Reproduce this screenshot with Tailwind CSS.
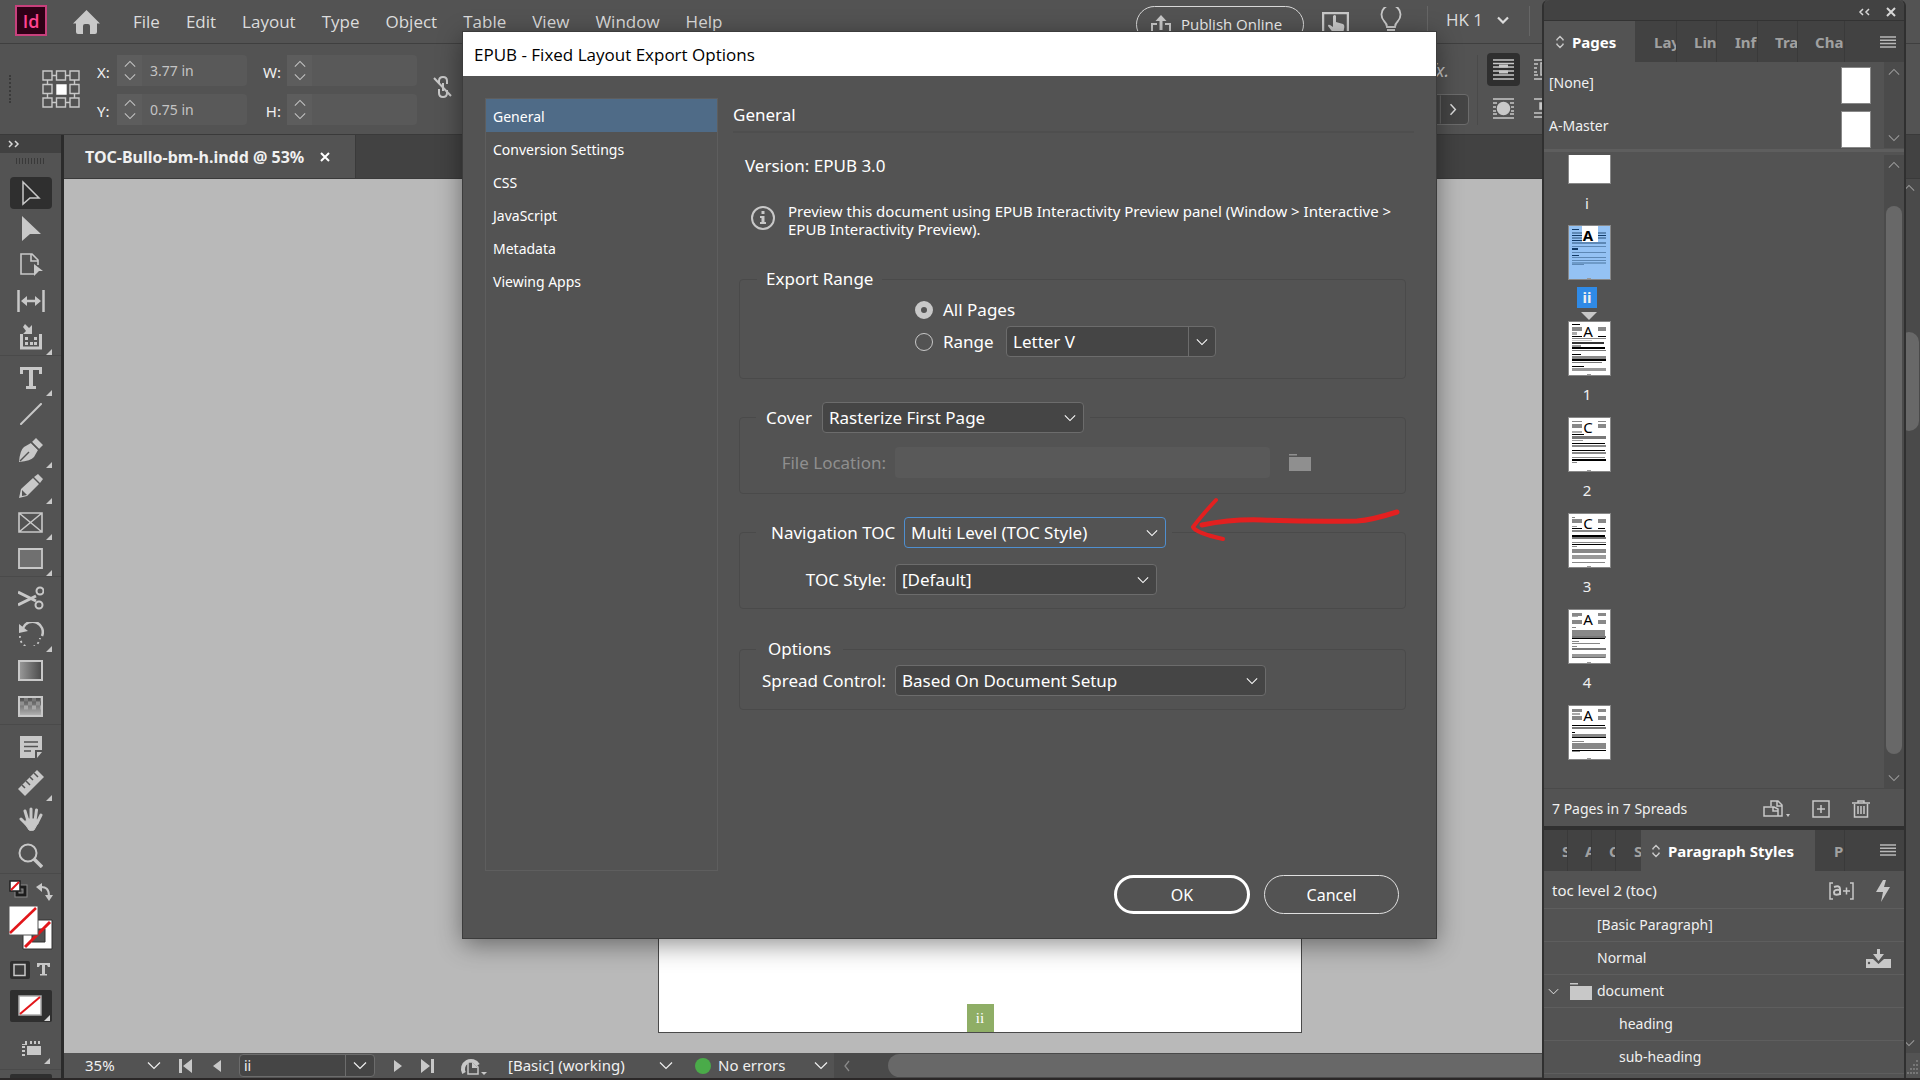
<!DOCTYPE html>
<html lang="en">
  <head>
    <meta charset="UTF-8" />
    <meta name="viewport" content="width=device-width, initial-scale=1" />
    <title>TOC-Bullo-bm-h.indd @ 53%</title>
    <script src="https://cdn.jsdelivr.net/npm/@tailwindcss/browser@4"></script>
  </head>
  <body
    class="relative flex flex-col h-screen overflow-hidden bg-[#535353] text-[#f0f0f0] text-[15px] font-['Noto_Sans',sans-serif]"
  >
    <!-- shared shapes -->
    <svg class="hidden">
      <symbol id="down" viewBox="0 0 14 9">
        <path d="M1 1.5l6 6 6-6" fill="none" stroke="currentColor" stroke-width="1.2" />
      </symbol>
      <symbol id="up" viewBox="0 0 14 9">
        <path d="M1 7.5l6-6 6 6" fill="none" stroke="currentColor" stroke-width="1.2" />
      </symbol>
      <symbol id="updown" viewBox="0 0 8 14">
        <path d="M1 5.500V4.500l3-3 3 3v1M1 8.500v1l3 3 3-3v-1" fill="none" stroke="currentColor" stroke-width="1.500" />
      </symbol>
      <symbol id="lines" viewBox="0 0 16 12">
        <path d="M0 1h16M0 4.300h16M0 7.600h16M0 11h16" stroke="currentColor" stroke-width="1.500" />
      </symbol>
      <symbol id="folder" viewBox="0 0 22 17">
        <path d="M0 0h8v1.500H0zM0 3h22v14H0z" fill="currentColor" />
      </symbol>
      <symbol id="corner" viewBox="0 0 6 6">
        <path d="M6 0v6H0z" fill="currentColor" />
      </symbol>
    </svg>

    <!-- menu bar -->
    <header class="flex items-start h-11 shrink-0 border-b border-[#3f3f3f] pl-[15px] font-['Open_Sans',sans-serif] text-[#dcdcdc]">
      <div class="mt-[5px] grid place-items-center w-8 h-[31px] bg-[#2e0016] border-2 border-[#c8407c] text-[#ff4490] text-lg leading-none font-semibold">Id</div>
      <button class="ml-[26px] mt-[10px] w-[27px] h-6" aria-label="Home">
        <svg viewBox="0 0 27 24" class="w-full h-full"><path d="M13.500 0L27 13.500H24V22q0 2-2 2H17v-8q0-2-2-2h-3q-2 0-2 2v8H5q-2 0-2-2V13.500H0z" fill="#c8c8c8" /></svg>
      </button>
      <nav class="ml-[33px] flex gap-[26px] leading-[43px] text-[17px]">
        <a href="#">File</a><a href="#">Edit</a><a href="#">Layout</a><a href="#">Type</a><a href="#">Object</a><a href="#">Table</a><a href="#">View</a><a href="#">Window</a><a href="#">Help</a>
      </nav>
      <div class="ml-auto flex items-start pr-[390px]">
        <button class="mt-[6px] flex items-center gap-[10px] h-[37px] w-[168px] pl-[14px] border border-[#d8d8d8] rounded-full text-[15px] text-[#f0f0f0]">
          <svg viewBox="0 0 20 20" class="w-5 h-5 text-[#c8c8c8]" fill="none" stroke="currentColor" stroke-width="2"><path d="M6 9H1v10h18V9h-5" /><path d="M10 15V4" stroke-width="3" /><path d="M10 0l5.500 6h-11z" fill="currentColor" stroke="none" /></svg>
          Publish Online
        </button>
        <svg viewBox="0 0 27 26" class="ml-[18px] mt-3 w-[27px] h-[26px] text-[#c8c8c8]"><path d="M1 1h25v24H1z" fill="none" stroke="currentColor" stroke-width="2.500" /><path d="M11 4q2-2 3 0v6l7 2q2 1 1 5l-1 5H12l-6-8q0-2 2-1l3 2z" fill="currentColor" /></svg>
        <svg viewBox="0 0 22 28" class="ml-[31px] mt-[7px] w-[22px] h-7 text-[#c8c8c8]"><path d="M7 20q0-3-3-6a9.500 9.500 0 1 1 14 0q-3 3-3 6z" fill="none" stroke="currentColor" stroke-width="1.800" /><path d="M7 22h8v4H7z" fill="currentColor" /></svg>
        <div class="ml-[25px] mt-[6px] w-px h-[30px] bg-[#666]"></div>
        <button class="ml-[18px] flex items-center gap-[14px] h-10 text-[17px]">HK 1
          <svg class="w-[12px] h-2" viewBox="0 0 12 8"><path d="M1 1.500l5 5 5-5" fill="none" stroke="#dcdcdc" stroke-width="2.200" /></svg>
        </button>
        <div class="ml-5 mt-[6px] w-px h-[30px] bg-[#666]"></div>
      </div>
    </header>

    <!-- control strip -->
    <div class="flex h-[91px] shrink-0 border-b border-[#3a3a3a] pl-2 pt-[11px] text-[#c4c4c4]">
      <div class="mt-5 w-[3px] h-7 border-r-2 border-dotted border-[#3a3a3a]"></div>
      <svg viewBox="0 0 38 38" class="ml-[31px] mt-[15px] w-[38px] h-[38px]" fill="none" stroke="#c8c8c8" stroke-width="1.400">
        <path d="M1 1h9v9H1zM14.500 1h9v9h-9zM28 1h9v9h-9zM1 14.500h9v9H1zM28 14.500h9v9h-9zM1 28h9v9H1zM14.500 28h9v9h-9zM28 28h9v9h-9zM10 5.500h4.500M23.500 5.500H28M10 32.500h4.500M23.500 32.500H28M5.500 10v4.500M5.500 23.500V28M32.500 10v4.500M32.500 23.500V28" />
        <path d="M15 15h9v9h-9z" fill="#fff" stroke="#fff" />
      </svg>
      <div class="ml-[17px] grid grid-cols-[20px_130px_40px_130px] auto-rows-[31px] gap-y-2 items-center h-[70px]">
        <label for="x" class="pt-1 text-[#f0f0f0]">X:</label>
        <div class="flex h-full bg-[#595959] rounded-sm"><span class="w-[25px] flex flex-col items-center justify-between py-[5px] bg-[#5d5d5d]"><svg class="w-3 h-2"><use href="#up" /></svg><svg class="w-3 h-2"><use href="#down" /></svg></span><input id="x" value="3.77 in" class="w-[100px] pl-2 bg-transparent text-sm" /></div>
        <label for="w" class="pt-1 text-[#f0f0f0] text-right pr-[6px]">W:</label>
        <div class="flex h-full bg-[#595959] rounded-sm"><span class="w-[25px] flex flex-col items-center justify-between py-[5px] bg-[#5d5d5d]"><svg class="w-3 h-2"><use href="#up" /></svg><svg class="w-3 h-2"><use href="#down" /></svg></span><input id="w" class="w-[100px] pl-2 bg-transparent" /></div>
        <label for="y" class="pt-1 text-[#f0f0f0]">Y:</label>
        <div class="flex h-full bg-[#595959] rounded-sm"><span class="w-[25px] flex flex-col items-center justify-between py-[5px] bg-[#5d5d5d]"><svg class="w-3 h-2"><use href="#up" /></svg><svg class="w-3 h-2"><use href="#down" /></svg></span><input id="y" value="0.75 in" class="w-[100px] pl-2 bg-transparent text-sm" /></div>
        <label for="h" class="pt-1 text-[#f0f0f0] text-right pr-[6px]">H:</label>
        <div class="flex h-full bg-[#595959] rounded-sm"><span class="w-[25px] flex flex-col items-center justify-between py-[5px] bg-[#5d5d5d]"><svg class="w-3 h-2"><use href="#up" /></svg><svg class="w-3 h-2"><use href="#down" /></svg></span><input id="h" class="w-[100px] pl-2 bg-transparent" /></div>
      </div>
      <svg viewBox="0 0 20 22" class="ml-4 mt-[21px] w-5 h-[22px]" fill="none" stroke="#c8c8c8" stroke-width="2"><path d="M6 8V5q0-4 4-4t4 4v3M6 13v4q0 4 4 4t4-4v-3M10 7v8M1 2l17 18" /></svg>
      <div class="ml-auto mr-[365px] flex items-start">
        <div class="w-[70px]">
          <div class="h-[31px] pl-[31px] text-lg italic leading-[31px]">fx.</div>
          <button class="mt-2 flex w-[70px] h-[31px] border border-[#6c6c6c] rounded bg-[#454545]" aria-label="More">
            <svg viewBox="0 0 70 29" class="w-full h-full"><path d="M41.500 0v29" stroke="#6c6c6c" /><path d="M52 9l5 5.500-5 5.500" fill="none" stroke="#dcdcdc" stroke-width="1.500" /></svg>
          </button>
        </div>
        <div class="ml-2 mr-[9px] w-px h-[70px] bg-[#4a4a4a]"></div>
        <div class="w-[33px] flex flex-col items-center">
          <div class="-mt-[2px] grid place-items-center w-[33px] h-[33px] rounded bg-[#2f2f2f]"><svg viewBox="0 0 21 21" class="w-[21px] h-[21px]" stroke="#c8c8c8" stroke-width="1.500"><path d="M0 1h21M0 4.500h21M0 8h21M0 12h21M0 16h21M0 20h21" /><path d="M6 7h9M6 13h9" stroke-width="3" /></svg></div>
          <svg viewBox="0 0 21 21" class="mt-3 w-[21px] h-[21px]" stroke="#c8c8c8" stroke-width="1.500"><path d="M0 1h21M0 5h4M17 5h4M0 9h3M18 9h3M0 13h3M18 13h3M0 16h4M17 16h4M0 20h21" /><circle cx="10.500" cy="10.500" r="6" fill="#c8c8c8" /></svg>
        </div>
        <svg viewBox="0 0 21 66" class="ml-[14px] mt-1 w-[21px] h-[66px]" stroke="#c8c8c8" stroke-width="1.500" fill="none"><path d="M0 1h21M0 5h4M0 9h3M0 13h3M0 16h4M0 20h21M7 4h8v12H7zM0 40h21M0 54h21M0 58h21" /><path d="M6 44h9v6H6z" fill="#c8c8c8" /></svg>
      </div>
    </div>

    <div class="flex flex-1 min-h-0">
      <!-- toolbox -->
      <aside class="w-16 shrink-0 overflow-hidden border-r-[3px] border-[#2b2b2b] text-[#c8c8c8]">
        <div class="h-[18px] pl-2 flex items-center bg-[#414141]"><svg viewBox="0 0 12 8" class="w-3 h-2" fill="none" stroke="#d8d8d8" stroke-width="1.500"><path d="M1 1l3 3-3 3M7 1l3 3-3 3" /></svg></div>
        <svg viewBox="0 0 30 6" class="ml-[15px] my-[5px] w-[30px] h-[6px]"><path d="M1 3h29" stroke="#393939" stroke-width="6" stroke-dasharray="1 2" /></svg>
        <div class="flex flex-col items-center">
          <button class="relative h-[36px] w-[43px] mt-[6px] grid place-items-center" aria-label="Selection"><span class="grid place-items-center w-[42px] h-8 rounded bg-[#2f2f2f]"><svg viewBox="0 0 20 26" class="w-5 h-[26px]" fill="none" stroke="#c8c8c8" stroke-width="1.500"><path d="M2 2l16 16H9l-7 6z" /></svg></span></button>
          <button class="h-9 w-[43px] grid place-items-center" aria-label="Direct Selection"><svg viewBox="0 0 20 26" class="w-5 h-[26px]"><path d="M1 0l19 18H9l-8 7z" fill="currentColor" /></svg></button>
          <button class="h-9 w-[43px] grid place-items-center" aria-label="Page"><svg viewBox="0 0 24 24" class="w-6 h-6"><path d="M15 21H2V1h11l6 6v5M12 1v7h7" fill="none" stroke="currentColor" stroke-width="1.600" /><path d="M15 11l9 7h-4l-5 5z" fill="currentColor" /></svg></button>
          <button class="h-9 w-[43px] grid place-items-center" aria-label="Gap"><svg viewBox="0 0 28 22" class="w-7 h-[22px]"><path d="M1.500 0v22M26.500 0v22M6 11h16" stroke="currentColor" stroke-width="2.500" /><path d="M4 11l6-5v10zM24 11l-6-5v10z" fill="currentColor" /></svg></button>
          <button class="relative h-9 w-[43px] grid place-items-center" aria-label="Content Collector"><svg viewBox="0 0 22 26" class="w-[22px] h-[26px]"><path d="M1.500 10v14h19V10" fill="none" stroke="currentColor" stroke-width="3" /><path d="M5 13h3v3H5zM14 13h3v3h-3zM5 18h3v3H5zM10 18h3v3h-3zM14 18h3v3h-3zM12 1v9H3l3-3-3-4 2-3 4 4z" fill="currentColor" /></svg><svg class="absolute right-0 bottom-0 w-[6px] h-[6px]"><use href="#corner" /></svg></button>
          <hr class="w-full h-[5px] border-0 border-t border-[#4a4a4a]" />
          <button class="relative h-9 w-[43px] grid place-items-center" aria-label="Type"><svg viewBox="0 0 22 22" class="w-[22px] h-[22px]"><path d="M0 0h22v7h-3V3h-6v16h3v3H6v-3h3V3H3v4H0z" fill="currentColor" /></svg><svg class="absolute right-0 bottom-0 w-[6px] h-[6px]"><use href="#corner" /></svg></button>
          <button class="h-9 w-[43px] grid place-items-center" aria-label="Line"><svg viewBox="0 0 22 22" class="w-[22px] h-[22px]"><path d="M1 21L21 1" stroke="currentColor" stroke-width="2" stroke-linecap="round" /></svg></button>
          <button class="relative h-9 w-[43px] grid place-items-center" aria-label="Pen"><svg viewBox="0 0 24 24" class="w-6 h-6"><path d="M0 24q1-12 5-15l7-4 7 7-4 7q-3 4-15 5zM17 0l7 7-4 4-7-7z" fill="currentColor" /><path d="M1 23l9-9" stroke="#535353" stroke-width="1.500" /><path d="M12 4l8 8" stroke="#535353" stroke-width="1.500" /></svg><svg class="absolute right-0 bottom-0 w-[6px] h-[6px]"><use href="#corner" /></svg></button>
          <button class="relative h-9 w-[43px] grid place-items-center" aria-label="Pencil"><svg viewBox="0 0 24 24" class="w-6 h-6"><path d="M0 24l2-9L14 4l6 6L8 22zM19 0l5 5-3 4-6-6z" fill="currentColor" /><path d="M3 16l5 5-5 1z" fill="#535353" /></svg><svg class="absolute right-0 bottom-0 w-[6px] h-[6px]"><use href="#corner" /></svg></button>
          <button class="relative h-9 w-[43px] grid place-items-center" aria-label="Frame"><svg viewBox="0 0 25 21" class="w-[25px] h-[21px]"><path d="M1 1h23v19H1zL24 20M24 1L1 20" fill="none" stroke="currentColor" stroke-width="1.600" /></svg><svg class="absolute right-0 bottom-0 w-[6px] h-[6px]"><use href="#corner" /></svg></button>
          <button class="relative h-9 w-[43px] grid place-items-center" aria-label="Rectangle"><svg viewBox="0 0 25 21" class="w-[25px] h-[21px]"><path d="M1 1h23v19H1z" fill="#707070" stroke="currentColor" stroke-width="1.800" /></svg><svg class="absolute right-0 bottom-0 w-[6px] h-[6px]"><use href="#corner" /></svg></button>
          <hr class="w-full h-1 border-0 border-t border-[#4a4a4a]" />
          <button class="h-9 w-[43px] grid place-items-center" aria-label="Scissors"><svg viewBox="0 0 26 24" class="w-[26px] h-6" fill="none" stroke="currentColor" stroke-width="2"><path d="M0 6l18 9M0 19l18-9" stroke-width="3" /><circle cx="22" cy="5" r="3.500" /><circle cx="21" cy="19" r="3.500" /></svg></button>
          <button class="relative h-9 w-[43px] grid place-items-center" aria-label="Rotate"><svg viewBox="0 0 26 24" class="w-[26px] h-6" fill="none" stroke="currentColor" stroke-width="2.500"><path d="M5 6a10 10 0 0 1 19 8" /><path d="M2 14a10 10 0 0 0 20 2" stroke-width="1.800" stroke-dasharray="2 3" /><path d="M1 2v9l9-2z" fill="currentColor" stroke="none" /></svg><svg class="absolute right-0 bottom-0 w-[6px] h-[6px]"><use href="#corner" /></svg></button>
          <button class="h-9 w-[43px] grid place-items-center" aria-label="Gradient Swatch"><span class="w-[25px] h-[21px] border-2 border-[#c8c8c8] bg-linear-to-r from-[#979797] to-[#4d4d4d]"></span></button>
          <button class="h-9 w-[43px] grid place-items-center" aria-label="Gradient Feather"><span class="w-[25px] h-[21px] border-2 border-[#c8c8c8] bg-linear-to-b from-[#505050] to-[#b0b0b0]"><svg viewBox="0 0 21 17" class="w-full h-full"><path d="M0 5.500h21" stroke="#909090" stroke-width="4" stroke-dasharray="4 4" /><path d="M4 9.500h17" stroke="#a8a8a8" stroke-width="4" stroke-dasharray="4 4" /><path d="M4 1.500h17" stroke="#777" stroke-width="4" stroke-dasharray="4 4" /></svg></span></button>
          <hr class="w-full h-[5px] border-0 border-t border-[#4a4a4a]" />
          <button class="h-9 w-[43px] grid place-items-center" aria-label="Note"><svg viewBox="0 0 22 22" class="w-[22px] h-[22px]"><path d="M0 0h22v14h-7v8H0zM17 16h5l-5 6z" fill="currentColor" /><path d="M4 6h14M4 10.500h14M4 15h7" stroke="#535353" stroke-width="1.500" /></svg></button>
          <button class="relative h-9 w-[43px] grid place-items-center" aria-label="Measure"><svg viewBox="0 0 26 26" class="w-[26px] h-[26px]"><path d="M0 19L19 0l7 7L7 26z" fill="currentColor" /><path d="M4 15l3 3M8 11l4 4M12 7l3 3M16 3l4 4" stroke="#535353" stroke-width="1.500" /></svg><svg class="absolute right-0 bottom-0 w-[6px] h-[6px]"><use href="#corner" /></svg></button>
          <button class="h-9 w-[43px] grid place-items-center" aria-label="Hand"><svg viewBox="0 0 24 25" class="w-6 h-[25px]" fill="none" stroke="currentColor" stroke-width="3" stroke-linecap="round"><path d="M2 12l5 5M6 4l3 10M12 2v12M17.500 3L16 14M22 8l-4 8" /><path d="M8 12h9l2 4-4 7q-3 1-5 0l-4-6z" fill="currentColor" stroke-width="1" /></svg></button>
          <button class="h-9 w-[43px] grid place-items-center" aria-label="Zoom"><svg viewBox="0 0 25 25" class="w-[25px] h-[25px]" fill="none" stroke="currentColor" stroke-width="2"><circle cx="10" cy="10" r="8.500" /><path d="M16 16l8 8" stroke-width="3.500" /></svg></button>
          <hr class="w-full h-[2px] border-0 border-t border-[#4a4a4a]" />
        </div>
        <!-- fill and stroke swatches -->
        <svg viewBox="0 0 61 204" class="w-[61px] h-[204px]">
          <path d="M17 12h8v8h-8z" fill="none" stroke="#8a8a8a" stroke-width="5" /><path d="M17 12h8v8h-8z" fill="none" stroke="#1c1c1c" stroke-width="3" />
          <path d="M10 6h10v10H10z" fill="#fff" stroke="#222" stroke-width="1.500" /><path d="M11 15l8-8" stroke="#e2161a" stroke-width="2" />
          <path d="M40 12q9-1 9 9" fill="none" stroke="#c8c8c8" stroke-width="2" /><path d="M36 12l6-4v9zM49 26l-4-6h8z" fill="#c8c8c8" />
          <path d="M23 45h29v29H23z" fill="#fff" stroke="#333" /><path d="M32 54h13v13H32z" fill="#535353" stroke="#333" /><path d="M25 72l25-25" stroke="#e2161a" stroke-width="3" />
          <path d="M9 31h29v29H9z" fill="#fff" stroke="#555" /><path d="M10 58l26-25" stroke="#e2161a" stroke-width="2.500" />
          <rect x="10" y="86" width="20" height="18" rx="2" fill="#2f2f2f" /><path d="M14 89.500h11v11H14z" fill="#3c3c3c" stroke="#c8c8c8" stroke-width="1.500" />
          <path d="M37 88h13v4h-2l-1-2h-2v9h2v1.500h-7V99h2v-9h-2l-1 2h-2z" fill="#c8c8c8" />
          <rect x="10" y="115" width="42" height="32" rx="2" fill="#2f2f2f" /><path d="M19 121h22v19H19z" fill="#fff" stroke="#aaa" stroke-width="1.500" /><path d="M20 139l20-17" stroke="#e2161a" stroke-width="2" /><path d="M50 140v6h-6z" fill="#d8d8d8" />
          <path d="M27 171h14v9H27zM22 171h3v2h-3zM22 175h3v2h-3zM22 179h3v2h-3zM25 166h2v4h-5v-1h3zM30 166h2v3h-2zM34 166h2v3h-2zM38 166h2v3h-2zM50 183v6h-6z" fill="#c8c8c8" />
          <path d="M0 194.500h61" stroke="#4a4a4a" /><rect x="10" y="199" width="42" height="8" rx="2" fill="#2f2f2f" />
        </svg>
      </aside>

      <!-- document window -->
      <section class="flex flex-col flex-1 min-w-0">
        <div class="flex h-11 bg-[#424242] border-b border-[#3a3a3a]">
          <div class="flex items-center gap-4 w-[292px] pl-[21px] border-r border-[#3a3a3a] bg-[#535353] font-bold text-base whitespace-nowrap">TOC-Bullo-bm-h.indd @ 53%
            <button aria-label="Close"><svg viewBox="0 0 10 10" class="w-[10px] h-[10px]"><path d="M1 1l8 8M9 1L1 9" stroke="#fff" stroke-width="2" /></svg></button>
          </div>
        </div>
        <div class="flex flex-1 min-h-0">
          <main class="flex flex-1 justify-center items-end pb-5 bg-[#b9b9b9]">
            <div class="flex items-end justify-center w-[644px] h-[780px] bg-white border border-[#4a4a4a]">
              <div class="w-[27px] h-7 bg-[#8fae66] text-center leading-7 text-white font-['Liberation_Serif',serif]">ii</div>
            </div>
          </main>
          <div class="w-6 pt-[5px] pb-[6px] flex flex-col items-end bg-[#4a4a4a] text-[#9a9a9a]">
            <svg class="mr-[5px] w-3 h-2"><use href="#up" /></svg>
            <div class="mt-[140px] mr-px w-5 h-[99px] rounded-full bg-[#686868]"></div>
            <svg class="mt-auto mr-[5px] w-3 h-2"><use href="#down" /></svg>
          </div>
        </div>
        <div class="flex items-center h-[25px] shrink-0 bg-[#535353]">
          <button class="flex items-center justify-between w-[76px] ml-[21px]">35% <svg class="w-[14px] h-[9px]"><use href="#down" /></svg></button>
          <svg viewBox="0 0 44 14" class="ml-[18px] w-11 h-[14px]" fill="#c8c8c8"><path d="M0 0h3v14H0zM13 0v14L4 7zM42 1v12l-8-6z" /></svg>
          <div class="ml-4 flex h-[23px] w-[136px] border border-[#6c6c6c] rounded-sm bg-[#454545]">
            <input aria-label="Page" value="ii" class="w-[106px] pl-1 bg-transparent text-sm border-r border-[#6c6c6c]" /><span class="flex flex-1 items-center justify-center"><svg class="w-[14px] h-[9px]"><use href="#down" /></svg></span>
          </div>
          <svg viewBox="0 0 40 14" class="ml-[19px] w-10 h-[14px]" fill="#c8c8c8"><path d="M0 1v12l8-6zM27 0v14l9-7zM37 0h3v14h-3z" /></svg>
          <svg viewBox="0 0 29 20" class="ml-6 w-[29px] h-5"><path d="M6 17a8 8 0 1 1 14-8" fill="none" stroke="#c8c8c8" stroke-width="4" /><path d="M10 6h5l5 5v7H10z" fill="#535353" stroke="#c8c8c8" stroke-width="1.500" /><path d="M14 6v6h6z" fill="#c8c8c8" /><path d="M23 16h6l-3 3z" fill="#c8c8c8" /></svg>
          <button class="ml-[21px] flex items-center justify-between w-[165px]">[Basic] (working) <svg class="w-[14px] h-[9px]"><use href="#down" /></svg></button>
          <button class="ml-[22px] flex items-center w-[139px] h-full"><span class="mr-[7px] w-4 h-4 rounded-full bg-[#4aab49]"></span>No errors <svg class="ml-auto mr-[6px] w-[14px] h-[9px]"><use href="#down" /></svg></button>
          <div class="flex flex-1 items-center h-full bg-[#4a4a4a]">
            <svg viewBox="0 0 6 12" class="ml-[10px] w-[6px] h-3"><path d="M5 1L1 6l4 5" fill="none" stroke="#8a8a8a" stroke-width="1.300" /></svg>
            <div class="ml-[38px] flex-1 h-[23px] rounded-l-full bg-[#686868]"></div>
            <svg viewBox="0 0 22 25" class="w-[22px] h-[25px] bg-[#535353]"><path d="M18 8h3M15 12h6M12 16h9M9 20h12" stroke="#777" stroke-width="2" stroke-dasharray="2 1" /></svg>
          </div>
        </div>
      </section>
    </div>
    <div class="h-[2px] shrink-0 bg-[#2b2828]"></div>

    <!-- export dialog -->
    <div role="dialog" aria-label="EPUB - Fixed Layout Export Options" class="absolute left-[463px] top-8 w-[973px] bg-[#535353] text-white shadow-[0_6px_24px_rgba(0,0,0,0.45)] outline outline-[#3c3c3c]">
      <h1 class="h-11 pl-[11px] bg-white text-black text-[17px] leading-[45px] font-['Open_Sans',sans-serif]">EPUB - Fixed Layout Export Options</h1>
      <div class="flex pt-[22px] pl-[22px] pr-[22px]">
        <ul class="w-[233px] h-[773px] shrink-0 border border-[#5e5e5e] text-sm leading-[33px] *:h-[33px] *:pt-px *:px-[7px]">
          <li class="bg-[#4f6b87]">General</li>
          <li>Conversion Settings</li>
          <li>CSS</li>
          <li>JavaScript</li>
          <li>Metadata</li>
          <li>Viewing Apps</li>
        </ul>
        <form id="epub" class="flex-1 ml-[15px] text-[17px]">
          <h2 class="h-[35px] leading-[34px] border-b-2 border-[#4e4e4e]">General</h2>
          <p class="mt-[21px] ml-3 leading-6">Version: EPUB 3.0</p>
          <div class="mt-6 ml-[18px] flex gap-[13px] text-[15px] leading-[18px]">
            <svg viewBox="0 0 24 24" class="mt-1 w-6 h-6 shrink-0"><circle cx="12" cy="12" r="11" fill="none" stroke="#c8c8c8" stroke-width="2" /><path d="M10.500 5h3v3h-3zM9 10h4.500v6H15v2H9v-2h1.500v-4H9z" fill="#c8c8c8" /></svg>
            <p>Preview this document using EPUB Interactivity Preview panel (Window &gt; Interactive &gt;<br />EPUB Interactivity Preview).</p>
          </div>
          <fieldset class="mt-[29px] ml-[6px] mr-2 h-28 border border-[#4a4a4a] rounded pl-[175px] pt-[5px]">
            <legend class="-ml-[158px] px-[9px] leading-6">Export Range</legend>
            <label class="flex items-center gap-[10px] h-7"><input type="radio" name="range" checked class="appearance-none w-[18px] h-[18px] rounded-full border-[6px] border-[#c8c8c8]" />All Pages</label>
            <div class="flex items-center h-[35px]">
              <label class="flex items-center gap-[10px] w-[91px]"><input type="radio" name="range" class="appearance-none w-[18px] h-[18px] rounded-full border border-[#c8c8c8]" />Range</label>
              <div class="grid w-[210px] h-[31px] border border-[#6c6c6c] rounded bg-[#454545]">
                <select aria-label="Page range" class="[grid-area:1/1] appearance-none pl-[6px]"><option>Letter V</option></select>
                <span class="[grid-area:1/1] justify-self-end grid place-items-center w-[27px] border-l border-[#6c6c6c] pointer-events-none"><svg class="w-3 h-2"><use href="#down" /></svg></span>
              </div>
            </div>
          </fieldset>
          <fieldset class="mt-[23px] ml-[6px] mr-2 h-[92px] border border-[#4a4a4a] rounded pl-4">
            <legend class="flex items-center px-[6px]">
              <label for="cover" class="w-[60px] pl-1">Cover</label>
              <span class="grid w-[262px] h-[31px] border border-[#6c6c6c] rounded bg-[#454545]"><select id="cover" class="[grid-area:1/1] appearance-none pl-[6px]"><option>Rasterize First Page</option></select><svg class="[grid-area:1/1] self-center justify-self-end mr-[7px] w-3 h-2 pointer-events-none"><use href="#down" /></svg></span>
            </legend>
            <div class="flex items-center mt-[14px] text-[#8f8f8f]">
              <label for="loc" class="w-[130px] text-right">File Location:</label>
              <input id="loc" disabled class="ml-[9px] w-[375px] h-[31px] rounded bg-[#595959]" />
              <svg class="ml-[19px] w-[22px] h-[17px]"><use href="#folder" /></svg>
            </div>
          </fieldset>
          <fieldset class="mt-[23px] ml-[6px] mr-2 h-[92px] border border-[#4a4a4a] rounded pl-4">
            <legend class="flex items-center px-[6px]">
              <label for="nav" class="w-[142px] pl-[9px]">Navigation TOC</label>
              <span class="grid w-[262px] h-[31px] border border-[#4f8fd0] rounded bg-[#535353]"><select id="nav" class="[grid-area:1/1] appearance-none pl-[6px]"><option>Multi Level (TOC Style)</option></select><svg class="[grid-area:1/1] self-center justify-self-end mr-[7px] w-3 h-2 pointer-events-none"><use href="#down" /></svg></span>
            </legend>
            <div class="flex items-center mt-4">
              <label for="style" class="w-[130px] text-right">TOC Style:</label>
              <span class="ml-[9px] grid w-[262px] h-[31px] border border-[#6c6c6c] rounded bg-[#454545]"><select id="style" class="[grid-area:1/1] appearance-none pl-[6px]"><option>[Default]</option></select><svg class="[grid-area:1/1] self-center justify-self-end mr-[7px] w-3 h-2 pointer-events-none"><use href="#down" /></svg></span>
            </div>
          </fieldset>
          <fieldset class="mt-7 ml-[6px] mr-2 h-[73px] border border-[#4a4a4a] rounded pl-4">
            <legend class="px-3 leading-6">Options</legend>
            <div class="flex items-center mt-1">
              <label for="spread" class="w-[130px] text-right">Spread Control:</label>
              <span class="ml-[9px] grid w-[371px] h-[31px] border border-[#6c6c6c] rounded bg-[#454545]"><select id="spread" class="[grid-area:1/1] appearance-none pl-[6px]"><option>Based On Document Setup</option></select><svg class="[grid-area:1/1] self-center justify-self-end mr-[7px] w-3 h-2 pointer-events-none"><use href="#down" /></svg></span>
            </div>
          </fieldset>
        </form>
      </div>
      <div class="flex justify-end gap-[14px] mt-1 pb-[24px] pr-[37px] text-base">
        <button form="epub" class="w-[136px] h-[39px] pt-px rounded-full border-[3px] border-white">OK</button>
        <button form="epub" class="w-[135px] h-[39px] pt-px rounded-full border border-[#e0e0e0]">Cancel</button>
      </div>
      <!-- hand drawn arrow -->
      <svg viewBox="0 0 210 46" class="absolute left-[727px] top-[465px] w-[210px] h-[46px]" fill="none" stroke="#e32020" stroke-width="4" stroke-linecap="round" stroke-linejoin="round"><path d="M26 3Q12 18 3 30q3 6 30 12" /><path d="M12 28q30-6 60-5 50 2 95 1 15-1 40-9" stroke-width="5" /></svg>
    </div>

    <!-- floating panels -->
    <div class="absolute right-[14px] top-0 bottom-[2px] w-[364px] flex flex-col border-x-2 border-[#303030] rounded-t-md bg-[#535353] text-sm">
      <div class="flex items-center justify-end gap-4 h-[21px] pr-2 shrink-0 rounded-t-md bg-[#424242] border-b border-[#333] text-[#d8d8d8]">
        <svg viewBox="0 0 12 8" class="mt-1 w-3 h-2" fill="none" stroke="currentColor" stroke-width="1.500"><path d="M5 1L2 4l3 3M11 1L8 4l3 3" /></svg>
        <svg viewBox="0 0 10 10" class="mt-1 w-[10px] h-[10px]" stroke="currentColor" stroke-width="2"><path d="M1 1l8 8M9 1L1 9" /></svg>
      </div>
      <div class="flex h-[41px] shrink-0 bg-[#424242] text-[#a0a0a0] text-[15px] font-bold leading-[42px]">
        <div class="flex items-center gap-2 w-[91px] pl-3 bg-[#535353] text-white"><svg class="w-2 h-[14px] text-[#c8c8c8]"><use href="#updown" /></svg>Pages</div>
        <div class="w-[42px] pl-[19px] overflow-hidden border-r border-[#3a3a3a]">Lay</div>
        <div class="w-10 pl-[17px] overflow-hidden border-r border-[#3a3a3a]">Lin</div>
        <div class="w-[41px] pl-[18px] overflow-hidden border-r border-[#3a3a3a]">Inf</div>
        <div class="w-10 pl-[17px] overflow-hidden border-r border-[#3a3a3a]">Tra</div>
        <div class="w-[47px] pl-[17px] overflow-hidden border-r border-[#3a3a3a]">Cha</div>
        <svg class="ml-auto mr-2 mt-[15px] w-4 h-3 text-[#b8b8b8]"><use href="#lines" /></svg>
      </div>
      <div class="flex h-[86px] shrink-0">
        <div class="flex-1 pl-[5px] pr-[13px] pt-[5px] overflow-hidden">
          <div class="flex justify-between h-[44px] leading-8">[None]<span class="w-[30px] h-[37px] bg-white border border-[#888]"></span></div>
          <div class="flex justify-between leading-[30px]">A-Master<span class="w-[30px] h-[37px] bg-white border border-[#888]"></span></div>
        </div>
        <div class="w-5 py-[6px] flex flex-col items-center justify-between bg-[#4b4b4b] text-[#9a9a9a]"><svg class="w-3 h-2"><use href="#up" /></svg><svg class="w-3 h-2"><use href="#down" /></svg></div>
      </div>
      <div class="h-[3px] mt-px mb-[3px] shrink-0 bg-[#5e5e5e]"></div>
      <div class="flex flex-1 min-h-0">
        <div id="pages" class="flex-1 pl-6 overflow-hidden text-[15px]"></div>
        <div class="w-5 py-[6px] flex flex-col items-center bg-[#4b4b4b] text-[#9a9a9a]">
          <svg class="w-3 h-2"><use href="#up" /></svg>
          <div class="flex-1 w-4 mt-[37px] mb-[20px] rounded-full bg-[#686868]"></div>
          <svg class="w-3 h-2"><use href="#down" /></svg>
        </div>
      </div>
      <div class="flex items-center h-[38px] shrink-0 pl-2 pr-[34px] pt-[2px] border-t border-[#4a4a4a]">
        <span>7 Pages in 7 Spreads</span>
        <div class="ml-auto flex gap-[22px] text-[#c8c8c8]">
          <svg viewBox="0 0 27 18" class="w-[27px] h-[18px]" fill="none" stroke="currentColor" stroke-width="1.500"><path d="M8 6V1h7l4 4v11h-4M14 1v5h5M8 7H1v9h14V9l-4-2H8M10 7v4h5" /><path d="M23 14h4l-2 3z" fill="currentColor" stroke="none" /></svg>
          <svg viewBox="0 0 18 18" class="w-[18px] h-[18px]" fill="none" stroke="currentColor" stroke-width="1.500"><path d="M1 1h16v16H1zM9 5v8M5 9h8" /></svg>
          <svg viewBox="0 0 18 18" class="w-[18px] h-[18px]" fill="none" stroke="currentColor" stroke-width="1.500"><path d="M0 3h18M6 3V1h6v2M2.500 4v13h13V4M6 6v8M9 6v8M12 6v8" /></svg>
        </div>
      </div>
      <div class="h-[4px] shrink-0 bg-[#303030]"></div>
      <div class="flex h-[41px] shrink-0 bg-[#424242] text-[#a0a0a0] text-[15px] font-bold leading-[42px]">
        <div class="w-6 pl-[18px] overflow-hidden border-r border-[#3a3a3a]">S</div>
        <div class="w-6 pl-[17px] overflow-hidden border-r border-[#3a3a3a]">A</div>
        <div class="w-6 pl-[17px] overflow-hidden border-r border-[#3a3a3a]">C</div>
        <div class="w-[25px] pl-[18px] overflow-hidden">S</div>
        <div class="flex items-center gap-2 w-[174px] pl-[11px] bg-[#535353] text-white whitespace-nowrap"><svg class="w-2 h-[14px] text-[#c8c8c8]"><use href="#updown" /></svg>Paragraph Styles</div>
        <div class="w-[30px] pl-[19px] border-r border-[#3a3a3a]">P</div>
        <svg class="ml-auto mr-2 mt-[14px] w-4 h-3 text-[#b8b8b8]"><use href="#lines" /></svg>
      </div>
      <div class="flex items-center h-[37px] shrink-0 pl-2 pr-[14px] pt-[2px] text-[15px]">toc level 2 (toc)
        <svg viewBox="0 0 25 18" class="ml-auto w-[25px] h-[18px]" fill="none" stroke="#c8c8c8" stroke-width="1.500"><path d="M4 1H1v16h3M21 1h3v16h-3M14 9h7M17.500 5.500v7" /><path d="M5 5q6-2 6 2v6M11 8q-6-1-6 2.500t6 1.500" stroke-width="2" /></svg>
        <svg viewBox="0 0 14 22" class="ml-[22px] w-[14px] h-[22px]"><path d="M7 0h3L8 7h6L5 22l2-10H0z" fill="#c8c8c8" /></svg>
      </div>
      <ul class="shrink-0 h-[170px] overflow-hidden *:h-[33px] *:flex *:items-center *:border-t *:border-[#5e5e5e]">
        <li class="pl-[53px]">[Basic Paragraph]</li>
        <li class="pl-[53px]">Normal<svg viewBox="0 0 25 19" class="ml-auto mr-[13px] w-[25px] h-[19px]"><path d="M0 10h7l5.500 5 5.500-5h7v9H0zM11 0h3v5h4l-5.500 7L7 5h4z" fill="#c8c8c8" /><circle cx="3" cy="14" r="1.200" fill="#535353" /></svg></li>
        <li class="pl-1"><svg class="w-[11px] h-[7px]"><use href="#down" /></svg><svg class="ml-[11px] mr-[5px] w-[22px] h-[17px] text-[#c8c8c8]"><use href="#folder" /></svg>document</li>
        <li class="pl-[75px]">heading</li>
        <li class="pl-[75px]">sub-heading</li>
        <li></li>
      </ul>
    </div>

    <script>
      // text rows of each page preview: [y, height, width, colour]
      const pages = [
        { label: "ii", master: "A", active: true, rows: [[4,1,7,"#123a66"],[7,2,34,"#5d88b5"],[10,1,34,"#123a66"],[12,2,34,"#5d88b5"],[15,1,14,"#123a66"],[17,2,34,"#5d88b5"],[21,1,34,"#5d88b5"],[23,2,6,"#123a66"],[27,1,34,"#5d88b5"],[30,1,7,"#123a66"],[32,1,34,"#5d88b5"],[35,1,34,"#5d88b5"],[37,2,34,"#6d9ac8"],[39,1,12,"#5d88b5"]] },
        { label: "1", master: "A", rows: [[3,1,8,"#000"],[6,4,34,"#888"],[11,3,5,"#aaa"],[15,1,34,"#000"],[17,1,34,"#888"],[19,1,20,"#ccc"],[21,2,32,"#333"],[24,2,9,"#999"],[26,2,33,"#000"],[29,1,34,"#777"],[33,1,9,"#000"],[35,3,34,"#888"],[38,2,34,"#000"],[41,1,30,"#777"],[45,1,12,"#000"],[47,3,34,"#999"]] },
        { label: "2", master: "C", rows: [[4,1,34,"#888"],[7,4,34,"#888"],[14,2,20,"#aaa"],[17,1,12,"#000"],[19,3,34,"#777"],[23,1,11,"#999"],[26,1,33,"#000"],[28,2,34,"#888"],[33,1,33,"#000"],[35,2,34,"#888"],[40,1,33,"#888"],[42,2,34,"#000"],[45,1,5,"#888"]] },
        { label: "3", master: "C", rows: [[4,1,3,"#888"],[6,4,34,"#888"],[13,1,5,"#999"],[15,1,33,"#000"],[17,2,34,"#888"],[22,2,33,"#000"],[24,2,34,"#777"],[29,1,34,"#888"],[31,1,34,"#000"],[33,1,5,"#888"],[36,4,34,"#888"],[42,4,34,"#999"],[49,1,33,"#888"]] },
        { label: "4", master: "A", rows: [[4,3,34,"#888"],[7,1,6,"#aaa"],[11,4,34,"#888"],[18,1,4,"#888"],[21,6,33,"#888"],[27,2,34,"#777"],[29,1,33,"#000"],[32,1,7,"#888"],[34,1,28,"#888"],[37,1,5,"#888"],[39,2,34,"#777"],[45,4,34,"#999"],[48,1,33,"#666"]] },
        { label: "", master: "A", rows: [[4,3,34,"#888"],[8,2,8,"#aaa"],[11,4,34,"#888"],[20,1,33,"#000"],[22,2,34,"#777"],[27,1,3,"#000"],[29,3,34,"#888"],[32,1,34,"#000"],[36,1,12,"#888"],[38,6,34,"#888"],[45,1,34,"#000"],[46,1,8,"#888"]] },
      ];

      const list = document.getElementById("pages");
      list.innerHTML =
        '<div class="w-[43px] h-[29px] bg-white border border-t-0 border-[#888]"></div>' +
        '<div class="w-[38px] h-[41px] leading-[38px] text-center">i</div>';

      for (const page of pages) {
        const rows = page.rows
          .map(([y, h, w, c]) => `<rect x="4" y="${y}" width="${w}" height="${h}" fill="${c}" />`)
          .join("");
        const bg = page.active ? "#94c2f4" : "#fff";
        const weight = page.active ? "bold" : "normal";
        const badge = page.active
          ? '<div class="w-[20px] h-[21px] ml-[9px] mt-[7px] leading-[21px] bg-[#2f8ae6] text-center font-bold">ii</div><svg viewBox="0 0 16 8" class="ml-[13px] mt-1 mb-px w-4 h-2"><path d="M0 0h16l-8 8z" fill="#c8c8c8" /></svg>'
          : `<div class="w-[38px] h-[41px] leading-9 text-center">${page.label}</div>`;
        list.innerHTML += `<svg viewBox="0 0 43 55" class="block w-[43px] h-[55px]">
          <rect x="0.500" y="0.500" width="42" height="54" fill="${bg}" stroke="#888" />${rows}
          <rect x="14" y="1" width="16" height="16" fill="#fff" />
          <text x="20" y="16" text-anchor="middle" font-size="15" font-weight="${weight}">${page.master}</text>
          <rect x="19" y="53" width="4" height="1" fill="#999" /></svg>${badge}`;
      }
    </script>
  </body>
</html>
